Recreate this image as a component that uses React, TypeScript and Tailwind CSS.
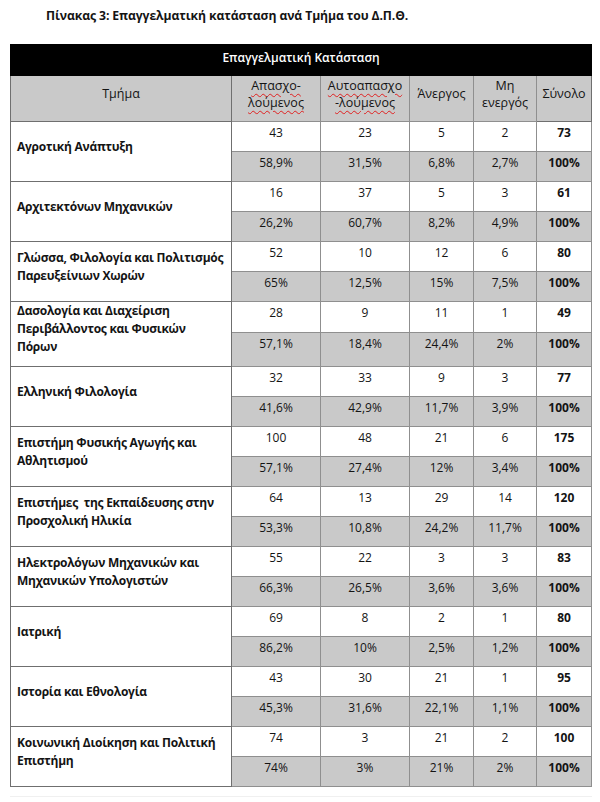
import React from "react";

type Dept = {
  name: string[];
  counts: string[];
  pcts: string[];
  tall?: boolean;
};

const departments: Dept[] = [
  { name: ["Αγροτική Ανάπτυξη"], counts: ["43", "23", "5", "2", "73"], pcts: ["58,9%", "31,5%", "6,8%", "2,7%", "100%"] },
  { name: ["Αρχιτεκτόνων Μηχανικών"], counts: ["16", "37", "5", "3", "61"], pcts: ["26,2%", "60,7%", "8,2%", "4,9%", "100%"] },
  { name: ["Γλώσσα, Φιλολογία και Πολιτισμός", "Παρευξείνιων Χωρών"], counts: ["52", "10", "12", "6", "80"], pcts: ["65%", "12,5%", "15%", "7,5%", "100%"] },
  {
    name: ["Δασολογία και Διαχείριση", "Περιβάλλοντος και Φυσικών", "Πόρων"],
    counts: ["28", "9", "11", "1", "49"],
    pcts: ["57,1%", "18,4%", "24,4%", "2%", "100%"],
    tall: true,
  },
  { name: ["Ελληνική Φιλολογία"], counts: ["32", "33", "9", "3", "77"], pcts: ["41,6%", "42,9%", "11,7%", "3,9%", "100%"] },
  { name: ["Επιστήμη Φυσικής Αγωγής και", "Αθλητισμού"], counts: ["100", "48", "21", "6", "175"], pcts: ["57,1%", "27,4%", "12%", "3,4%", "100%"] },
  { name: ["Επιστήμες\u00a0 της Εκπαίδευσης στην", "Προσχολική Ηλικία"], counts: ["64", "13", "29", "14", "120"], pcts: ["53,3%", "10,8%", "24,2%", "11,7%", "100%"] },
  { name: ["Ηλεκτρολόγων Μηχανικών και", "Μηχανικών Υπολογιστών"], counts: ["55", "22", "3", "3", "83"], pcts: ["66,3%", "26,5%", "3,6%", "3,6%", "100%"] },
  { name: ["Ιατρική"], counts: ["69", "8", "2", "1", "80"], pcts: ["86,2%", "10%", "2,5%", "1,2%", "100%"] },
  { name: ["Ιστορία και Εθνολογία"], counts: ["43", "30", "21", "1", "95"], pcts: ["45,3%", "31,6%", "22,1%", "1,1%", "100%"] },
  { name: ["Κοινωνική Διοίκηση και Πολιτική", "Επιστήμη"], counts: ["74", "3", "21", "2", "100"], pcts: ["74%", "3%", "21%", "2%", "100%"] },
];

const font = { fontFamily: '"Open Sans", "Noto Sans", sans-serif' };

function Spell({ children }: { children: React.ReactNode }) {
  return (
    <span className="underline decoration-wavy decoration-[#e02020] decoration-1 underline-offset-[3px]">
      {children}
    </span>
  );
}

export default function App() {
  return (
    <div className="min-h-screen w-[600px] bg-white text-[#141414]" style={font}>
      <h1 className="pl-[46px] pt-[7px] text-[12.2px] font-bold leading-[18px] tracking-[-0.1px]">
        Πίνακας 3: Επαγγελματική κατάσταση ανά Τμήμα του Δ.Π.Θ.
      </h1>

      <table className="ml-[10px] mt-[19px] w-[581px] table-fixed border-collapse text-[12px] leading-[17px]">
        <colgroup>
          <col className="w-[221px]" />
          <col className="w-[89px]" />
          <col className="w-[89px]" />
          <col className="w-[64px]" />
          <col className="w-[63px]" />
          <col className="w-[55px]" />
        </colgroup>
        <thead>
          <tr className="h-[31px]">
            <th colSpan={6} className="border border-black bg-black pb-[6px] text-center align-middle text-[12px] font-semibold text-white">
              Επαγγελματική Κατάσταση
            </th>
          </tr>
          <tr className="h-[46px] bg-[#c9c9c9] text-[12.5px]">
            <th className="border border-[#6f6f6f] pb-[10px] text-center align-middle font-normal">Τμήμα</th>
            <th className="border border-[#8f8f8f] pb-[10px] text-center align-middle font-normal">
              <Spell>Απασχο-</Spell>
              <br />
              <Spell>λούμενος</Spell>
            </th>
            <th className="border border-[#8f8f8f] pb-[10px] text-center align-middle font-normal">
              <Spell>Αυτοαπασχο</Spell>
              <br />
              <Spell>-λούμενος</Spell>
            </th>
            <th className="border border-[#8f8f8f] pb-[10px] text-center align-middle font-normal">Άνεργος</th>
            <th className="border border-[#8f8f8f] pb-[10px] text-center align-middle font-normal">
              Μη
              <br />
              ενεργός
            </th>
            <th className="border border-[#6f6f6f] pb-[10px] text-center align-middle font-normal">Σύνολο</th>
          </tr>
        </thead>
        <tbody>
          {departments.map((d) => (
            <React.Fragment key={d.name.join(" ")}>
              <tr className="h-[30px]">
                <td
                  rowSpan={2}
                  className="whitespace-nowrap border border-[#6f6f6f] pb-[10px] pl-[6px] align-middle text-[12px] font-bold leading-[18px] tracking-[-0.25px]"
                >
                  {d.name.map((line, i) => (
                    <div key={i}>{line}</div>
                  ))}
                </td>
                {d.counts.map((c, i) => (
                  <td
                    key={i}
                    className={`border border-[#8f8f8f] pt-[2px] text-center align-top ${i === 4 ? "font-bold" : ""}`}
                  >
                    {c}
                  </td>
                ))}
              </tr>
              <tr className={d.tall ? "h-[33px] bg-[#c9c9c9]" : "h-[30px] bg-[#c9c9c9]"}>
                {d.pcts.map((p, i) => (
                  <td
                    key={i}
                    className={`border border-[#8f8f8f] pt-[2px] text-center align-top ${i === 4 ? "font-bold" : ""}`}
                  >
                    {p}
                  </td>
                ))}
              </tr>
            </React.Fragment>
          ))}
        </tbody>
      </table>
      <div className="ml-[10px] mt-[9px] h-px w-[582px] bg-[#f0f0f0]" />
    </div>
  );
}
